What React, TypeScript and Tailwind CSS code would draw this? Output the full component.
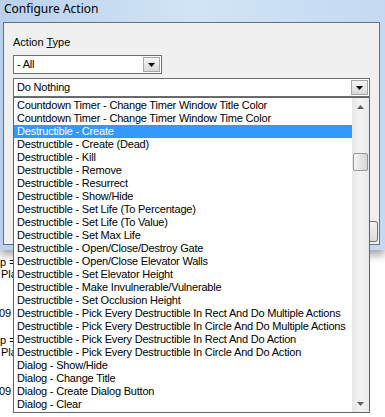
const ITEMS = [
  "Countdown Timer - Change Timer Window Title Color",
  "Countdown Timer - Change Timer Window Time Color",
  "Destructible - Create",
  "Destructible - Create (Dead)",
  "Destructible - Kill",
  "Destructible - Remove",
  "Destructible - Resurrect",
  "Destructible - Show/Hide",
  "Destructible - Set Life (To Percentage)",
  "Destructible - Set Life (To Value)",
  "Destructible - Set Max Life",
  "Destructible - Open/Close/Destroy Gate",
  "Destructible - Open/Close Elevator Walls",
  "Destructible - Set Elevator Height",
  "Destructible - Make Invulnerable/Vulnerable",
  "Destructible - Set Occlusion Height",
  "Destructible - Pick Every Destructible In Rect And Do Multiple Actions",
  "Destructible - Pick Every Destructible In Circle And Do Multiple Actions",
  "Destructible - Pick Every Destructible In Rect And Do Action",
  "Destructible - Pick Every Destructible In Circle And Do Action",
  "Dialog - Show/Hide",
  "Dialog - Change Title",
  "Dialog - Create Dialog Button",
  "Dialog - Clear",
];

const SELECTED = 2;

function DownArrow({ color = "#000" }: { color?: string }) {
  return (
    <svg width="7" height="4" viewBox="0 0 7 4">
      <path d="M0 0H7L3.5 4Z" fill={color} />
    </svg>
  );
}

function UpArrow({ color = "#000" }: { color?: string }) {
  return (
    <svg width="7" height="4" viewBox="0 0 7 4">
      <path d="M0 4H7L3.5 0Z" fill={color} />
    </svg>
  );
}

function DropButton() {
  return (
    <div className="flex h-full w-[17px] items-center justify-center border border-[#a7a7a7] bg-gradient-to-b from-[#f6f6f6] to-[#d9d9d9]">
      <DownArrow />
    </div>
  );
}

function Combo({ text, className }: { text: string; className: string }) {
  return (
    <div className={"flex border border-[#6e6e6e] bg-white p-[1px] " + className}>
      <span className="flex-1 pl-[2px] text-[11px] leading-[15px] tracking-[-0.2px] text-black">{text}</span>
      <DropButton />
    </div>
  );
}

function Scrollbar() {
  return (
    <div className="flex w-[17px] flex-col bg-gradient-to-r from-[#e6e6e6] via-[#f3f3f3] to-[#e9e9e9]">
      <div className="flex h-[17px] items-center justify-center">
        <UpArrow color="#606060" />
      </div>
      <div className="flex flex-1 flex-col px-[1px] pt-[38px]">
        <div className="h-[18px] rounded-[2px] border border-[#979797] bg-gradient-to-r from-[#f4f4f4] to-[#d6d6d6]" />
      </div>
      <div className="flex h-[17px] items-center justify-center">
        <DownArrow color="#606060" />
      </div>
    </div>
  );
}

function Behind() {
  const block = (
    <div className="flex flex-col text-[11px] text-black">
      <div className="h-[12px] leading-[11px]">p =</div>
      <div className="h-[12px] pl-[1px] leading-[11px]">Pla</div>
      <div className="h-[27px]" />
      <div className="-ml-[1px] h-[12px] leading-[11px]">09</div>
      <div className="h-[15px]" />
    </div>
  );
  return (
    <div className="flex flex-col pt-[7px]">
      {block}
      {block}
    </div>
  );
}

export default function App() {
  return (
    <div className="relative h-[417px] w-[385px] overflow-hidden bg-white font-['Liberation_Sans',Arial,sans-serif]">
      {/* dialog window */}
      <div className="flex h-[250px] flex-col bg-gradient-to-r from-[#b9d1ea] via-[#d2e4f6] to-[#c3daf2] pb-[5px] pl-[3px] pr-[5px] shadow-[0_5px_8px_rgba(0,0,0,0.35)]">
        <div className="h-[22px] pl-[1px] pt-[1px] font-['Noto_Sans',sans-serif] text-[12px] leading-[16px] text-black">
          Configure Action
        </div>
        <div className="flex flex-1 flex-col border border-[#5f7185] bg-[#f0f0f0] pl-[9px] pt-[13px]">
          <div className="text-[11px] leading-[13px] text-black">
            Action <span className="underline">T</span>ype
          </div>
          <Combo text="- All" className="mt-[6px] h-[19px] w-[149px]" />
          <Combo text="Do Nothing" className="mt-[4px] h-[19px] w-[357px]" />
          <div className="mt-auto flex justify-end pb-[2px] pr-[1px]">
            <div className="h-[21px] w-[75px] rounded-[3px] border border-[#707070] bg-gradient-to-b from-[#f2f2f2] to-[#dcdcdc]" />
          </div>
        </div>
      </div>

      {/* window underneath */}
      <Behind />

      {/* dropped list */}
      <div className="absolute left-[13px] top-[97px] flex h-[316px] w-[357px] border border-[#646464] bg-white">
        <div className="flex flex-1 flex-col pt-[1px]">
          {ITEMS.map((item, i) => (
            <div
              key={item}
              className={
                "h-[13px] whitespace-nowrap pl-[3px] text-[11px] leading-[13px] tracking-[-0.2px] " +
                (i === SELECTED ? "bg-[#3399ff] text-white" : "text-black")
              }
            >
              {item}
            </div>
          ))}
        </div>
        <Scrollbar />
      </div>
    </div>
  );
}
